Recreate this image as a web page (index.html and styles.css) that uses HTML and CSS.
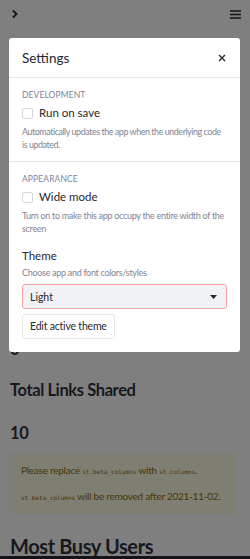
FILE: index.html
```html
<!DOCTYPE html>
<html>
	<head>
		<meta charset="UTF-8">
		<meta name="viewport" content="width=device-width, initial-scale=1">
		<title>Settings</title>
		<link rel="stylesheet" href="styles.css">
	</head>
	<body>
		<div class="app">
			<div class="topbar">
				<svg class="chev" width="8" height="10" viewBox="0 0 8 10"><path d="M2 1.5 L5.5 5 L2 8.5" fill="none" stroke="#262730" stroke-width="1.8"/></svg>
				<svg class="menu" width="11" height="9" viewBox="0 0 11 9"><path d="M0 1h11M0 4.5h11M0 8h11" stroke="#262730" stroke-width="1.6"/></svg>
			</div>
			<div class="main">
				<h2 class="metric">0</h2>
				<h2 class="title">Total Links Shared</h2>
				<h2 class="metric second">10</h2>
				<div class="warn">
					<p>Please replace <code>st.beta_columns</code> with <code>st.columns</code>.</p>
					<p><code>st.beta_columns</code> will be removed after 2021-11-02.</p>
				</div>
				<h1 class="big">Most Busy Users</h1>
			</div>
		</div>

		<div class="overlay">
			<div class="modal">
				<div class="modal-head">
					<span>Settings</span>
					<svg class="close" width="8" height="8" viewBox="0 0 8 8"><path d="M1 1L7 7M7 1L1 7" stroke="#262730" stroke-width="1.4"/></svg>
				</div>
				<div class="section">
					<div class="caps">DEVELOPMENT</div>
					<label class="check"><span class="box"></span>Run on save</label>
					<p class="desc first">Automatically updates the app when the underlying code is updated.</p>
				</div>
				<div class="section last">
					<div class="caps">APPEARANCE</div>
					<label class="check"><span class="box"></span>Wide mode</label>
					<p class="desc">Turn on to make this app occupy the entire width of the screen</p>
					<div class="theme">Theme</div>
					<p class="desc tight">Choose app and font colors/styles</p>
					<div class="select">
						<span>Light</span>
						<svg width="7" height="4" viewBox="0 0 7 4"><path d="M0 0h7L3.5 4z" fill="#262730"/></svg>
					</div>
					<div class="btn">Edit active theme</div>
				</div>
			</div>
		</div>
	</body>
</html>
```

FILE: styles.css
```css
body{
margin: 0;
background: #ffffff;
font-family: "Source Sans Pro", Lato, "Noto Sans", sans-serif;
color: #31333f;
height: 559px;
overflow: hidden;
}
.app{
height: 559px;
overflow: hidden;
border-bottom: 3px solid #262730;
box-sizing: border-box;
}
.topbar{
display: flex;
justify-content: space-between;
align-items: center;
padding: 9px 9px 0 10px;
height: 10px;
}
.chev{
margin-left: 1px;
}
.main{
padding: 320px 10px 0 10px;
}
h1, h2{
margin: 0;
font-weight: 700;
color: #31333f;
}
.metric{
font-size: 16.5px;
line-height: 20px;
letter-spacing: -0.3px;
}
.title{
font-size: 16.5px;
line-height: 20px;
letter-spacing: -0.4px;
margin-top: 21px;
}
.metric.second{
margin-top: 23px;
}
.warn{
background: #fffce7;
color: #926c05;
margin: 10px 4px 0 -1px;
padding: 5px 10px 4px 12px;
border-radius: 3px;
font-size: 10px;
letter-spacing: -0.25px;
}
.warn p{
margin: 0;
line-height: 24px;
white-space: nowrap;
}
.warn code{
font-family: "DejaVu Sans Mono", monospace;
font-size: 6px;
letter-spacing: 0;
}
.big{
font-size: 20px;
line-height: 24px;
letter-spacing: -0.4px;
margin-top: 20px;
}
.overlay{
position: fixed;
top: 0;
left: 0;
right: 0;
bottom: 0;
background: rgba(0, 0, 0, 0.5);
}
.modal{
margin: 38px 10px 0 9px;
background: #ffffff;
border-radius: 3px;
}
.modal-head{
display: flex;
justify-content: space-between;
align-items: center;
height: 39px;
padding: 0 14px 0 13px;
border-bottom: 1px solid #e6e6e6;
font-size: 13.5px;
color: #262730;
}
.section{
padding: 11px 13px 10px 13px;
border-bottom: 1px solid #e6e6e6;
}
.section.last{
border-bottom: none;
padding-bottom: 13px;
}
.caps{
font-size: 8.5px;
color: #808495;
letter-spacing: 0.1px;
line-height: 12px;
}
.check{
display: flex;
align-items: center;
margin-top: 5px;
font-size: 11.5px;
color: #262730;
line-height: 14px;
}
.box{
width: 9px;
height: 9px;
border: 1px solid #d6d6d9;
border-radius: 2px;
margin-right: 6px;
}
.desc{
margin: 5px 0 0 0;
font-size: 9px;
letter-spacing: -0.3px;
line-height: 13px;
color: #808495;
}
.desc.first{
font-size: 8.9px;
letter-spacing: -0.42px;
}
.desc.tight{
margin-top: 3px;
}
.theme{
margin-top: 14px;
font-size: 11.5px;
color: #262730;
line-height: 14px;
}
.select{
display: flex;
justify-content: space-between;
align-items: center;
margin-top: 5px;
height: 23px;
padding: 0 9px 0 7px;
background: #f0f2f6;
border: 1px solid #f4a3a3;
border-radius: 3px;
font-size: 10.5px;
color: #262730;
}
.btn{
display: inline-block;
margin-top: 5px;
padding: 0 7px;
height: 23px;
line-height: 23px;
border: 1px solid #e6e6e6;
border-radius: 3px;
font-size: 10.5px;
letter-spacing: -0.2px;
color: #262730;
}
```
